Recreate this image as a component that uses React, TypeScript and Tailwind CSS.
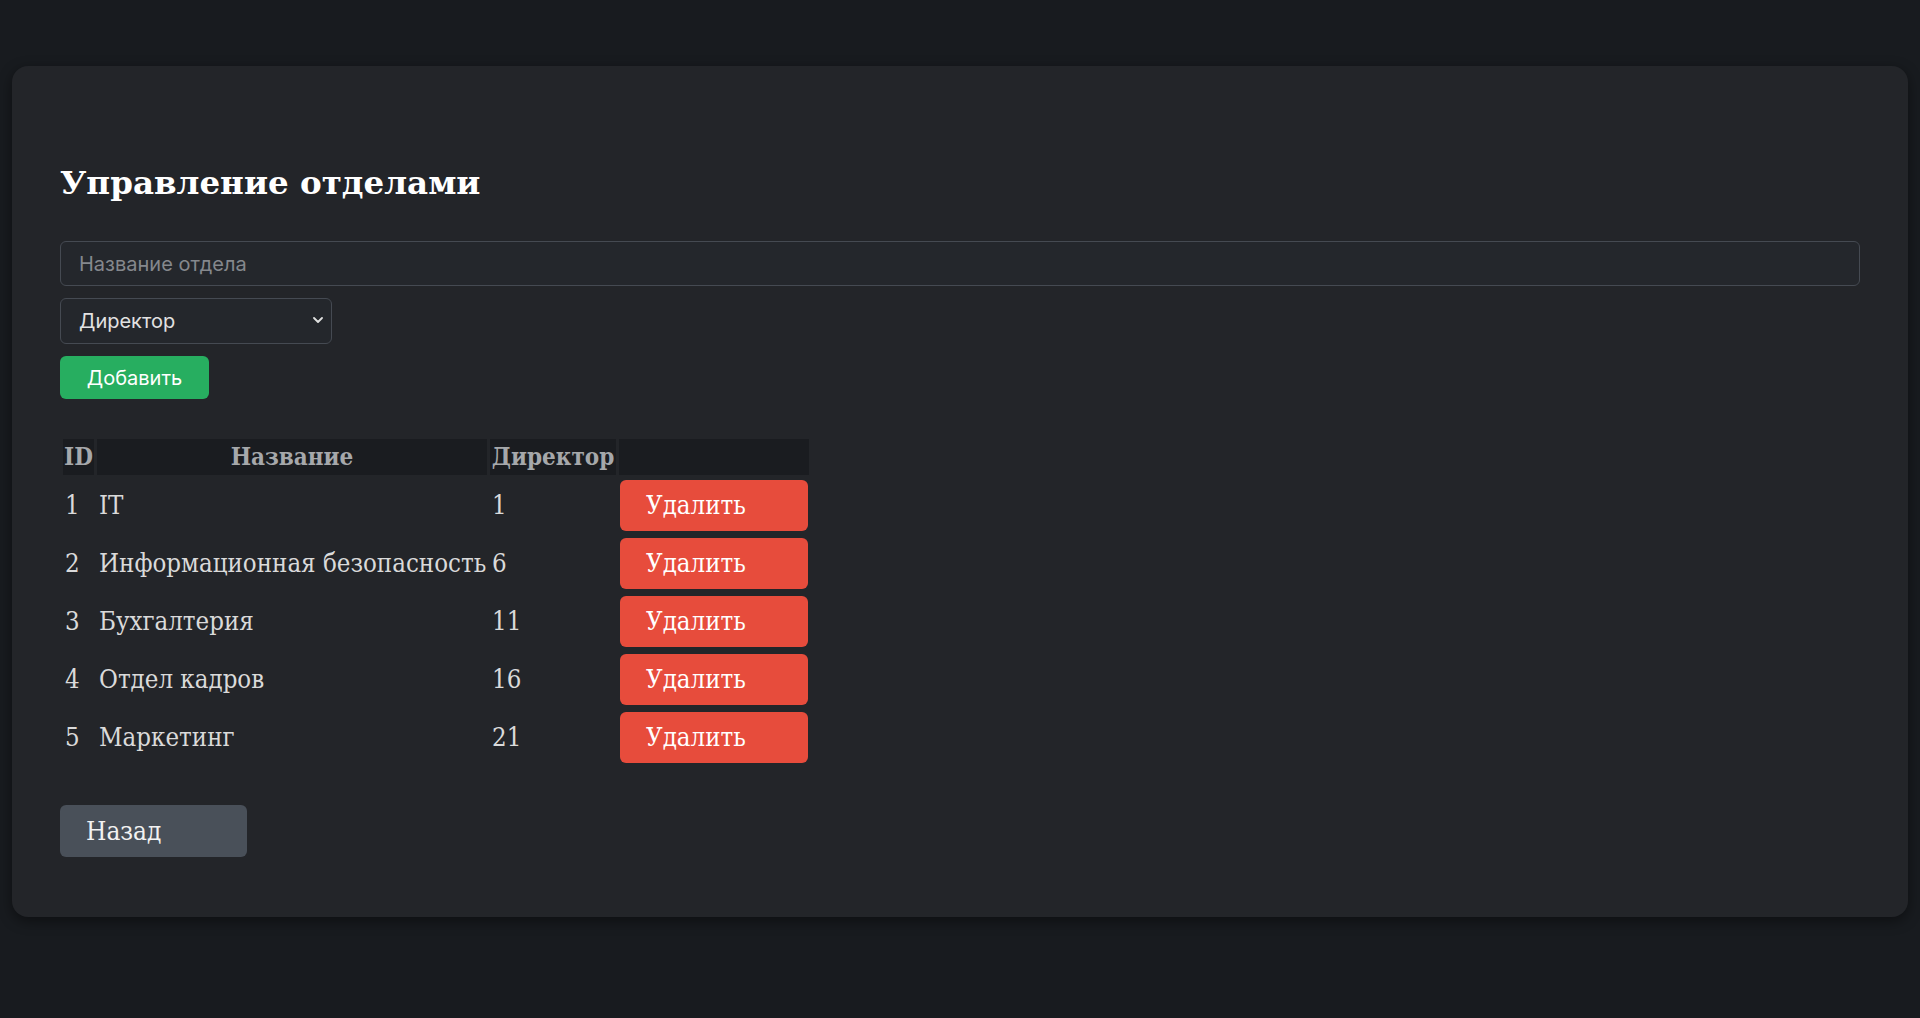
const departments = [
  { id: 1, name: "IT", director: 1 },
  { id: 2, name: "Информационная безопасность", director: 6 },
  { id: 3, name: "Бухгалтерия", director: 11 },
  { id: 4, name: "Отдел кадров", director: 16 },
  { id: 5, name: "Маркетинг", director: 21 },
];

export default function App() {
  return (
    <div className="min-h-screen bg-[#181b1f] px-3 pt-[66px] pb-[101px]">
      <div className="rounded-2xl bg-[#232529] px-12 pt-12 pb-[60px] shadow-[0_4px_14px_rgba(0,0,0,0.45)]">
        <h1 className="mt-[50px] mb-[40px] font-['DejaVu_Serif',serif] text-[32.5px] leading-[37px] font-bold text-white">
          Управление отделами
        </h1>

        <div className="flex flex-col gap-3">
          <input
            placeholder="Название отдела"
            className="h-[45px] w-full rounded-md border border-[#454a52] bg-[#24272c] px-[18px] font-['Inter',sans-serif] text-[20px] text-[#e4e4e4] placeholder:text-[#85888d] outline-none"
          />
          <div className="relative w-[272px]">
            <div className="flex h-[46px] items-center rounded-md border border-[#454a52] bg-[#24272c] px-[18px] font-['Inter',sans-serif] text-[20px] text-[#e2e2e2]">
              Директор
            </div>
            <svg
              className="absolute top-[19px] right-[9px]"
              width="10"
              height="6"
              viewBox="0 0 10 6"
              fill="none"
              stroke="#e0e0e0"
              strokeWidth="1.8"
              strokeLinecap="round"
              strokeLinejoin="round"
            >
              <polyline points="1,1 5,5 9,1" />
            </svg>
          </div>
          <button className="h-[43px] w-[149px] rounded-md bg-[#27ae60] font-['Inter',sans-serif] text-[20px] text-white">
            Добавить
          </button>
        </div>

        <table className="mt-[37px] table-fixed border-separate border-spacing-[3px] font-['DejaVu_Serif_Condensed',serif] text-[25.6px]">
          <thead>
            <tr className="h-[36px]">
              <th className="w-[31px] bg-[#1a1c20] p-0 text-[24px] font-bold text-[#a6a8ab]">ID</th>
              <th className="w-[390px] bg-[#1a1c20] p-0 text-[24px] font-bold text-[#a6a8ab]">Название</th>
              <th className="w-[126px] bg-[#1a1c20] p-0 text-[24px] font-bold text-[#a6a8ab]">Директор</th>
              <th className="w-[190px] bg-[#1a1c20] p-0"></th>
            </tr>
          </thead>
          <tbody>
            {departments.map((d) => (
              <tr key={d.id}>
                <td className="px-[2px] py-[2px] text-[#dadada]">{d.id}</td>
                <td className="py-[2px] pr-0 pl-[2px] whitespace-nowrap text-[#dadada]">{d.name}</td>
                <td className="px-[2px] py-[2px] text-[#dadada]">{d.director}</td>
                <td className="px-[1px] py-[2px]">
                  <button className="h-[51px] w-[188px] rounded-md bg-[#e74c3c] pl-[26px] text-left text-white">
                    Удалить
                  </button>
                </td>
              </tr>
            ))}
          </tbody>
        </table>

        <button className="mt-[37px] h-[52px] w-[187px] rounded-md bg-[#495059] pl-[26px] text-left font-['DejaVu_Serif_Condensed',serif] text-[26px] text-[#f2f2f2]">
          Назад
        </button>
      </div>
    </div>
  );
}
